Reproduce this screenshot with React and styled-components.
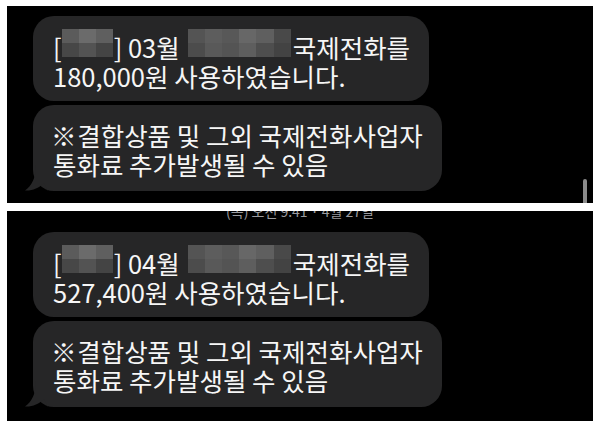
import React from "react";
import styled, { createGlobalStyle } from "styled-components";

const GlobalStyle = createGlobalStyle`
  html, body {
    margin: 0;
    padding: 0;
    background: #ffffff;
  }
  body {
    font-family: "Noto Sans CJK KR", "Noto Sans", sans-serif;
  }
`;

const Page = styled.div`
  width: 600px;
  height: 428px;
  padding: 6px 7px 0;
  box-sizing: border-box;
  display: flex;
  flex-direction: column;
  gap: 8px;
`;

const Panel = styled.section`
  position: relative;
  height: ${(p) => p.$height}px;
  background: #000;
  overflow: hidden;
  display: flex;
  flex-direction: column;
  padding: ${(p) => p.$top}px 0 0 26px;
  box-sizing: border-box;
`;

const Stamp = styled.div`
  margin: -8px 0 12px -26px;
  text-align: center;
  color: #9a9a9e;
  font-size: 14px;
  line-height: 17px;
  height: 17px;
  white-space: nowrap;
`;

const Thread = styled.div`
  display: flex;
  flex-direction: column;
  gap: 4px;
`;

const Bubble = styled.div`
  position: relative;
  width: ${(p) => p.$width}px;
  height: ${(p) => p.$height}px;
  box-sizing: border-box;
  padding: ${(p) => p.$pad}px 0 0 20px;
  background: #262627;
  border-radius: 21px;
  color: #f6f6f6;
  font-size: 25.5px;
`;

const Line = styled.div`
  height: 29px;
  line-height: 29px;
  white-space: nowrap;
`;

const Mark = styled.span`
  margin: 0 -5px 0 -2px;
`;

const Tail = styled.svg`
  position: absolute;
  left: -9px;
  bottom: 0;
`;

const Mosaic = styled.span`
  display: inline-grid;
  grid-template-columns: repeat(${(p) => p.$cols}, 1fr);
  grid-template-rows: 1fr 1fr;
  width: ${(p) => p.$width}px;
  height: 28px;
  vertical-align: top;
  margin: -3px ${(p) => p.$right || 0}px 0 ${(p) => p.$left || 0}px;
`;

const Cell = styled.span`
  background: ${(p) => p.$c};
`;

const Scrollbar = styled.div`
  position: absolute;
  right: 6px;
  bottom: 0;
  width: 4px;
  height: 24px;
  border-radius: 2px 2px 0 0;
  background: #8b8b8b;
`;

const nameCells = ["#5b5b5b", "#6b6b6b", "#5f5f5f", "#474747", "#535353", "#444444"];
const numberCells = [
  "#545454", "#5d5d5d", "#585858", "#676767", "#5f5f5f", "#494949",
  "#4c4c4c", "#595959", "#545454", "#5e5e5e", "#4e4e4e", "#434343",
];

function Blur({ cells, cols, width, left, right }) {
  return (
    <Mosaic $cols={cols} $width={width} $left={left} $right={right}>
      {cells.map((c, i) => (
        <Cell key={i} $c={c} />
      ))}
    </Mosaic>
  );
}

function Messages({ month, amount }) {
  return (
    <Thread>
      <Bubble $width={396} $height={85} $pad={16}>
        <Line>
          [<Blur cells={nameCells} cols={3} width={51} left={0} right={1} />] {month}월
          <Blur cells={numberCells} cols={6} width={103} left={8} right={2} />
          국제전화를
        </Line>
        <Line>{amount}원 사용하였습니다.</Line>
      </Bubble>
      <Bubble $width={409} $height={86} $pad={15}>
        <Line>
          <Mark>※</Mark> 결합상품 및 그외 국제전화사업자
        </Line>
        <Line>통화료 추가발생될 수 있음</Line>
        <Tail width="24" height="26" viewBox="0 0 24 26">
          <path d="M12 0 C12 12 8 21 1 25.5 C8 26 15 23 20 18 L24 26 L24 0 Z" fill="#262627" />
        </Tail>
      </Bubble>
    </Thread>
  );
}

export default function App() {
  return (
    <>
      <GlobalStyle />
      <Page>
        <Panel $height={197} $top={10}>
          <Messages month="03" amount="180,000" />
          <Scrollbar />
        </Panel>
        <Panel $height={210} $top={0}>
          <Stamp>(목) 오전 9:41 · 4월 27일</Stamp>
          <Messages month="04" amount="527,400" />
        </Panel>
      </Page>
    </>
  );
}
